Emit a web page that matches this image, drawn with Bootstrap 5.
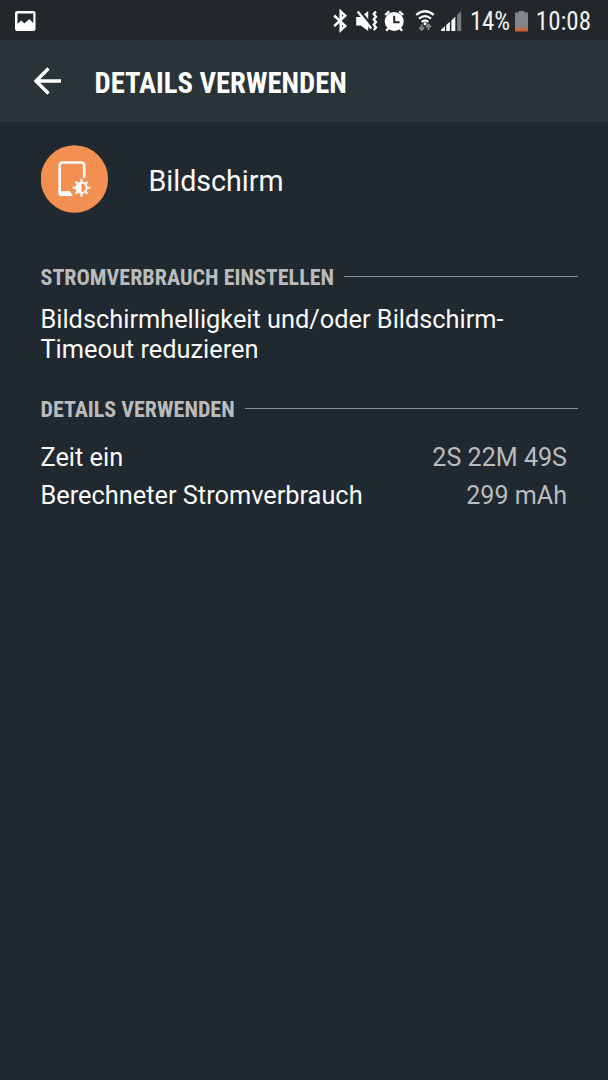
<!DOCTYPE html>
<html lang="de" data-bs-theme="dark">
<head>
<meta charset="utf-8">
<meta name="viewport" content="width=device-width, initial-scale=1">
<title>Details verwenden</title>
<link href="https://cdn.jsdelivr.net/npm/bootstrap@5.3.0/dist/css/bootstrap.min.css" rel="stylesheet">
<style>
body{background:#212930;color:#fafafa;font-family:Roboto,"Liberation Sans",sans-serif;font-size:25.35px;line-height:30px;min-height:1080px}
.cond{font-family:"Roboto Condensed",Roboto,sans-serif;font-stretch:75%;white-space:nowrap}
.statusbar{height:40px;background:#22272b;padding:0 17px 0 15px}
.status-text{font-size:25px;line-height:41px;color:#f0f1f1;padding-top:2px}
.pct{letter-spacing:-.2px}
.battery{margin:0 8px 0 5px}
.appbar{height:82px;background:#293439;padding-left:34px}
.appbar h1{font-size:28.65px;line-height:34px;margin:3px 0 0 32.5px;color:#fff}
.content{padding:23px 30px 0 40.5px}
.app-name{font-size:28.6px;line-height:34px;margin:3px 0 0 40px}
.section-title{font-size:22.05px;line-height:26px;color:#b9bbbd;margin:0;padding-top:1px}
.rule{height:1px;background:#858b8c;margin:-3px 0 0 10px}
.tips{margin-top:51px}
.tips p{margin:13px 0 0}
.usage{margin-top:32px}
.values{padding-right:11px;margin-top:19.4px}
.values .usage-row+.usage-row{margin-top:6.6px}
.val{color:#b9bbbd;font-size:25.1px}
svg{display:block;flex:none}
</style>
</head>
<body>
<header>
<div class="statusbar d-flex align-items-center justify-content-between">
<svg width="21" height="21" viewBox="0 0 21 21"><path fill="#fff" fill-rule="evenodd" d="M2 1h16.500a2 2 0 0 1 2 2v16a2 2 0 0 1-2 2H2a2 2 0 0 1-2-2V3a2 2 0 0 1 2-2ZM2.500 3.500v10.300L6.300 10.500l3 3L14.500 9l3.800 4.300V3.500Z"/></svg>
<div class="d-flex align-items-center">
<svg width="140" height="41" viewBox="-0.7 0 140 41">
<path d="M3.500 15.500 14.500 26 10 30.200V11.500L14.500 15.700 3.500 26.200" fill="none" stroke="#fff" stroke-width="2.500"/>
<path d="M25.500 17h4.500L37.500 11v20L30 25.500h-4.500Z" fill="#fff"/>
<path d="m28.500 10 15 18.500" stroke="#22272b" stroke-width="2.400"/><path d="m27 11.500 13.500 17" stroke="#fff" stroke-width="2.200"/>
<path d="M45.300 11.500 43 14l2.300 2.700-2.300 2.700 2.300 2.700-2.300 2.700 2.300 2.700-2.300 2.500" fill="none" stroke="#fff" stroke-width="2.300"/>
<circle cx="63.500" cy="21.500" r="9.500" fill="#fff"/><path d="m54.500 15 4-3.700m14 3.700-4-3.700M57.500 28.500l-2 2.300m14-2.300 2 2.300" stroke="#fff" stroke-width="2.300"/>
<path d="M63.500 15.800v6.400H69" fill="none" stroke="#22272b" stroke-width="2"/>
<path d="M85.500 15q8.800-7.500 17.600 0M88.300 18.700q6-5.200 12 0M91 22q3.300-3 6.600 0" fill="none" stroke="#fff" stroke-width="2.200"/>
<circle cx="94.300" cy="23.800" r="1.500" fill="#fff"/>
<path d="M91 24.500v5m-2.500-2.200 2.500 2.500 2.500-2.500M97.800 30v-5m-2.500 2.200 2.500-2.500 2.500 2.500" fill="none" stroke="#858a8c" stroke-width="1.900"/>
<path d="M110.500 31v-1.500l3.700-3.300V31ZM115.600 31v-6l3.500-3.200V31ZM120.700 31V20.500l3.900-3.800V31Z" fill="#fff"/>
<path d="M126.500 31V15l4-4.200V31Z" fill="#777c7e"/>
</svg>
<span class="cond status-text pct">14%</span>
<svg class="battery" width="13" height="41" viewBox="0 0 13 41"><path fill="#808586" d="M0 12.500h3.500V11h6v1.500H13V28H0Z"/><path fill="#ce653b" d="M0 28h13v3.500H0Z"/></svg>
<span class="cond status-text clock">10:08</span>
</div>
</div>
<nav class="appbar d-flex align-items-center">
<svg width="28" height="28" viewBox="0 0 28 28"><path d="M14.500 1.500 2 14l12.500 12.500M2 14h25" fill="none" stroke="#fff" stroke-width="3.400"/></svg>
<h1 class="cond fw-bold">DETAILS VERWENDEN</h1>
</nav>
</header>
<main class="content">
<div class="d-flex align-items-center">
<svg width="68" height="68" viewBox="0.3 0 68 68"><circle cx="33.700" cy="34" r="33.700" fill="#f19050"/>
<path d="M19 47V20.500q0-3 3-3h18.500q3 0 3 3V33" fill="none" stroke="#fafafa" stroke-width="2.600"/>
<path d="M17.700 46H29l3.300 5H20q-2.300 0-2.300-2.300Z" fill="#fafafa"/>
<g transform="translate(40.800 42.700)" stroke="#fafafa"><path d="M0-9V9M-9 0H9M-6-6 6 6M-6 6 6-6" stroke-width="2.100"/><circle r="5.200" fill="#fafafa" stroke-width="1.900"/><path d="M0-4.300a4.300 4.300 0 0 1 0 8.600Z" fill="#f19050" stroke="none"/></g></svg>
<div class="app-name">Bildschirm</div>
</div>
<section class="tips">
<div class="d-flex align-items-center"><h2 class="cond fw-bold section-title">STROMVERBRAUCH EINSTELLEN</h2><div class="rule flex-grow-1"></div></div>
<p>Bildschirmhelligkeit und/oder Bildschirm-<br>Timeout reduzieren</p>
</section>
<section class="usage">
<div class="d-flex align-items-center"><h2 class="cond fw-bold section-title">DETAILS VERWENDEN</h2><div class="rule flex-grow-1"></div></div>
<div class="values">
<div class="usage-row d-flex justify-content-between align-items-baseline"><span>Zeit ein</span><span class="val">2S 22M 49S</span></div>
<div class="usage-row d-flex justify-content-between align-items-baseline"><span>Berechneter Stromverbrauch</span><span class="val">299 mAh</span></div>
</div>
</section>
</main>
<script src="https://cdn.jsdelivr.net/npm/bootstrap@5.3.0/dist/js/bootstrap.bundle.min.js"></script>
</body>
</html>
